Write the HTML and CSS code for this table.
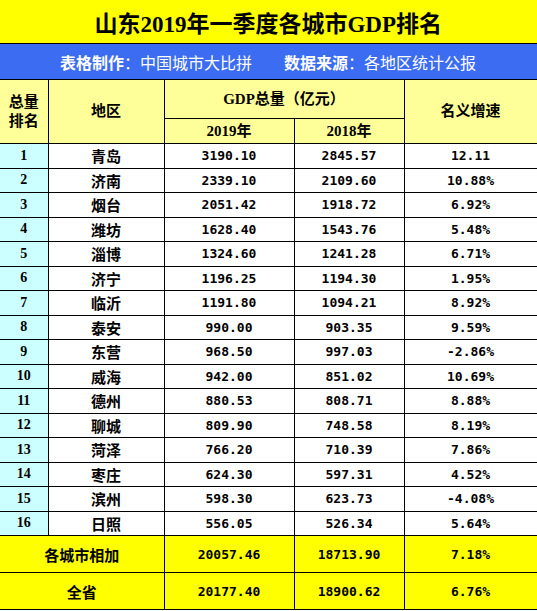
FILE: index.html
```html
<!DOCTYPE html>
<html lang="zh-CN">
<head>
    <meta charset="UTF-8">
    <meta name="viewport" content="width=device-width, initial-scale=1.0">
    <title>山东2019年一季度各城市GDP排名</title>
    <link rel="stylesheet" href="styles.css">
</head>
<body>
    <table class="gdp-table">
        <colgroup>
            <col class="col-rank">
            <col class="col-city">
            <col class="col-y19">
            <col class="col-y18">
            <col class="col-rate">
        </colgroup>
        <tr class="title-row">
            <td colspan="5">山东2019年一季度各城市GDP排名</td>
        </tr>
        <tr class="source-row">
            <td colspan="5">
                <div class="source">
                    <span class="source-item"><b>表格制作</b>：中国城市大比拼</span>
                    <span class="source-item"><b>数据来源</b>：各地区统计公报</span>
                </div>
            </td>
        </tr>
        <tr class="head-row head-top">
            <td rowspan="2">总量<br>排名</td>
            <td rowspan="2">地区</td>
            <td colspan="2">GDP总量（亿元）</td>
            <td rowspan="2">名义增速</td>
        </tr>
        <tr class="head-row head-bottom">
            <td>2019年</td>
            <td>2018年</td>
        </tr>
        <tr class="data-row"><td class="rank">1</td><td class="city">青岛</td><td class="num">3190.10</td><td class="num">2845.57</td><td class="num">12.11</td></tr>
        <tr class="data-row"><td class="rank">2</td><td class="city">济南</td><td class="num">2339.10</td><td class="num">2109.60</td><td class="num">10.88%</td></tr>
        <tr class="data-row"><td class="rank">3</td><td class="city">烟台</td><td class="num">2051.42</td><td class="num">1918.72</td><td class="num">6.92%</td></tr>
        <tr class="data-row"><td class="rank">4</td><td class="city">潍坊</td><td class="num">1628.40</td><td class="num">1543.76</td><td class="num">5.48%</td></tr>
        <tr class="data-row"><td class="rank">5</td><td class="city">淄博</td><td class="num">1324.60</td><td class="num">1241.28</td><td class="num">6.71%</td></tr>
        <tr class="data-row"><td class="rank">6</td><td class="city">济宁</td><td class="num">1196.25</td><td class="num">1194.30</td><td class="num">1.95%</td></tr>
        <tr class="data-row"><td class="rank">7</td><td class="city">临沂</td><td class="num">1191.80</td><td class="num">1094.21</td><td class="num">8.92%</td></tr>
        <tr class="data-row"><td class="rank">8</td><td class="city">泰安</td><td class="num">990.00</td><td class="num">903.35</td><td class="num">9.59%</td></tr>
        <tr class="data-row"><td class="rank">9</td><td class="city">东营</td><td class="num">968.50</td><td class="num">997.03</td><td class="num">-2.86%</td></tr>
        <tr class="data-row"><td class="rank">10</td><td class="city">威海</td><td class="num">942.00</td><td class="num">851.02</td><td class="num">10.69%</td></tr>
        <tr class="data-row"><td class="rank">11</td><td class="city">德州</td><td class="num">880.53</td><td class="num">808.71</td><td class="num">8.88%</td></tr>
        <tr class="data-row"><td class="rank">12</td><td class="city">聊城</td><td class="num">809.90</td><td class="num">748.58</td><td class="num">8.19%</td></tr>
        <tr class="data-row"><td class="rank">13</td><td class="city">菏泽</td><td class="num">766.20</td><td class="num">710.39</td><td class="num">7.86%</td></tr>
        <tr class="data-row"><td class="rank">14</td><td class="city">枣庄</td><td class="num">624.30</td><td class="num">597.31</td><td class="num">4.52%</td></tr>
        <tr class="data-row"><td class="rank">15</td><td class="city">滨州</td><td class="num">598.30</td><td class="num">623.73</td><td class="num">-4.08%</td></tr>
        <tr class="data-row"><td class="rank">16</td><td class="city">日照</td><td class="num">556.05</td><td class="num">526.34</td><td class="num">5.64%</td></tr>
        <tr class="sum-row"><td colspan="2" class="city">各城市相加</td><td class="num">20057.46</td><td class="num">18713.90</td><td class="num">7.18%</td></tr>
        <tr class="sum-row"><td colspan="2" class="city">全省</td><td class="num">20177.40</td><td class="num">18900.62</td><td class="num">6.76%</td></tr>
    </table>
</body>
</html>
```

FILE: styles.css
```css
body {
    margin: 0;
    padding: 0;
    background-color: #fff;
    font-family: "Liberation Serif", "Noto Sans CJK SC", serif;
    color: #000;
}
.gdp-table {
    width: 537px;
    table-layout: fixed;
    border-collapse: collapse;
}
.col-rank { width: 48px; }
.col-city { width: 116px; }
.col-y19 { width: 130px; }
.col-y18 { width: 110px; }
.col-rate { width: 133px; }
.gdp-table td {
    border: 1px solid #000;
    padding: 0;
    text-align: center;
    vertical-align: middle;
}
.gdp-table td:first-child {
    border-left: none;
}
.title-row td {
    height: 43px;
    background-color: #ffff00;
    font-size: 23px;
    font-weight: 600;
    border-top: none;
}
.source-row td {
    height: 35px;
    background-color: #3b6cf2;
    color: #fff;
    text-align: left;
}
.source {
    display: flex;
    gap: 32px;
    padding-left: 60px;
    font-family: "Noto Sans CJK SC", sans-serif;
    font-size: 16px;
}
.source b {
    font-weight: 700;
}
.head-row td {
    background-color: #ffff99;
    font-size: 15px;
    font-weight: 600;
    line-height: 1.25;
}
.head-bottom td:first-child {
    border-left: 1px solid #000;
}
.head-top td {
    height: 38px;
}
.head-bottom td {
    height: 24px;
}
.data-row td {
    height: 23.5px;
    font-weight: 700;
}
.rank {
    background-color: #ccffff;
    font-size: 14px;
}
.city {
    font-family: "Noto Sans CJK SC", sans-serif;
    font-size: 15px;
    font-weight: 600;
}
.num {
    font-family: "DejaVu Sans Mono", monospace;
    font-size: 13px;
}
.sum-row td {
    height: 36px;
    background-color: #ffff00;
    font-weight: 700;
}
```
